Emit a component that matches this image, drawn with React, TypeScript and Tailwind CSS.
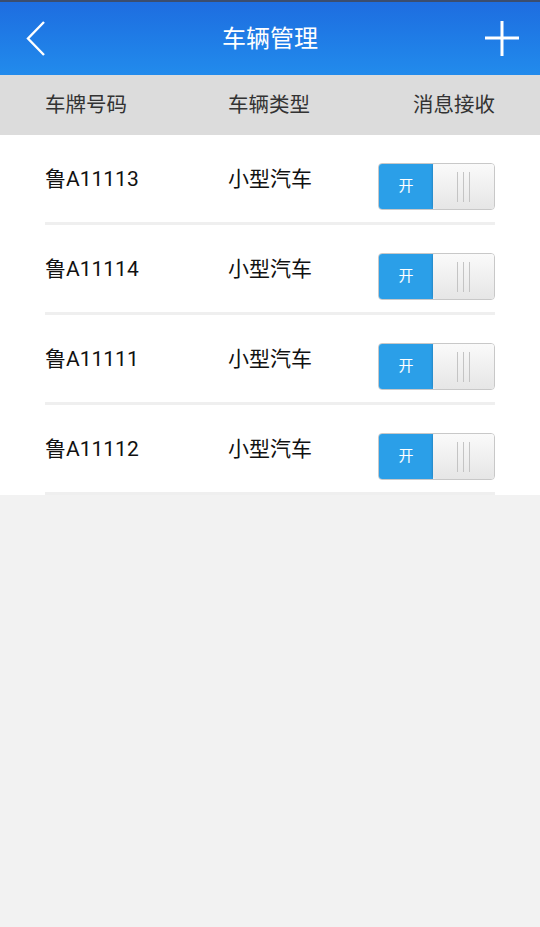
import React from 'react';

const cars = [
  { plate: '鲁A11113', type: '小型汽车' },
  { plate: '鲁A11114', type: '小型汽车' },
  { plate: '鲁A11111', type: '小型汽车' },
  { plate: '鲁A11112', type: '小型汽车' },
];

function Toggle() {
  return (
    <div className="mt-[14px] flex h-[47px] w-[117px] overflow-hidden rounded-[4px] border border-[#c8c8c8]">
      <div className="flex w-[54px] items-center justify-center bg-[#2b9fe8] text-[15px] text-white">开</div>
      <div className="flex flex-1 items-center justify-center gap-[5px] rounded-l-[3px] bg-gradient-to-b from-[#fafafa] to-[#e6e6e6] shadow-[-1px_0_2px_rgba(0,0,0,0.15)]">
        <span className="h-[30px] w-px bg-[#c4c4c4]" />
        <span className="h-[30px] w-px bg-[#c4c4c4]" />
        <span className="h-[30px] w-px bg-[#c4c4c4]" />
      </div>
    </div>
  );
}

export default function App() {
  return (
    <div
      className="flex min-h-[927px] w-[540px] flex-col bg-[#f2f2f2]"
      style={{ fontFamily: 'Roboto, "Noto Sans CJK SC", sans-serif' }}
    >
      {/* 标题栏 */}
      <div className="relative flex h-[75px] items-center justify-center border-t-2 border-[#3b4d6e] bg-gradient-to-b from-[#1e6de0] to-[#228bec]">
        <svg className="absolute left-[24px] top-[17px]" width="26" height="40" viewBox="0 0 26 40">
          <path d="M20 3 L4 19.5 L20 36" fill="none" stroke="#fff" strokeWidth="2.4" />
        </svg>
        <span className="text-[24px] text-white">车辆管理</span>
        <svg className="absolute right-[20px] top-[17px]" width="36" height="38" viewBox="0 0 36 38">
          <path d="M18 2 V37 M1 19 H35" fill="none" stroke="#fff" strokeWidth="3" />
        </svg>
      </div>

      {/* 表头 */}
      <div className="flex h-[60px] items-center bg-[#dcdcdc] pl-[45px] pr-[45px] text-[20.5px] text-[#333]">
        <span className="w-[183px]">车牌号码</span>
        <span className="flex-1">车辆类型</span>
        <span>消息接收</span>
      </div>

      {/* 列表 */}
      <div className="bg-white">
        {cars.map((c) => (
          <div key={c.plate} className="mx-[45px] flex h-[90px] items-center border-b-[3px] border-[#efefef] pt-[2px] text-[21px] text-[#111]">
            <span className="w-[183px]">{c.plate}</span>
            <span className="flex-1">{c.type}</span>
            <Toggle />
          </div>
        ))}
      </div>
    </div>
  );
}
